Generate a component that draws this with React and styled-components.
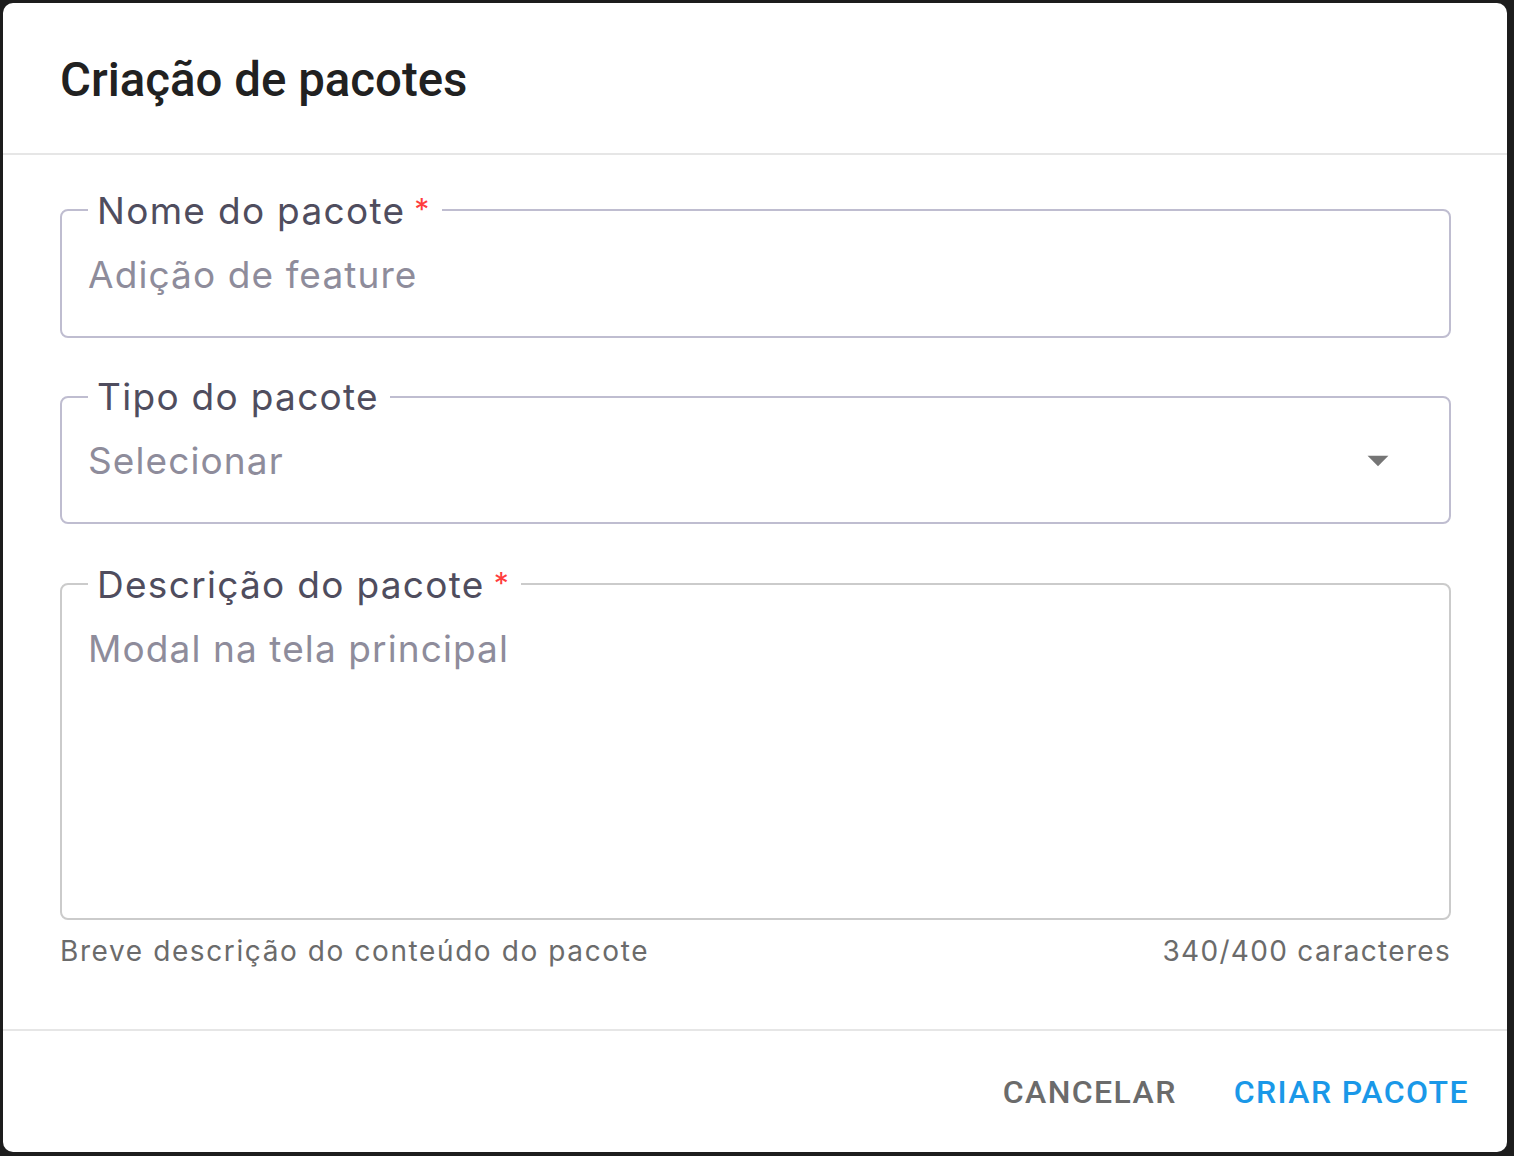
import React from "react";
import styled, { createGlobalStyle } from "styled-components";

const GlobalStyle = createGlobalStyle`
  html, body { margin: 0; padding: 0; }
  body { background: #1d1d1d; }
  * { box-sizing: border-box; }
`;

const Page = styled.div`
  padding: 3px 7px 4px 3px;
  height: 1156px;
`;

const Dialog = styled.div`
  background: #ffffff;
  border-radius: 10px;
  height: 1149px;
  display: flex;
  flex-direction: column;
  overflow: hidden;
`;

const Header = styled.header`
  height: 152px;
  display: flex;
  align-items: center;
  padding: 3px 57px 0;
  border-bottom: 2px solid #e6e6e6;
`;

const Title = styled.h1`
  margin: 0;
  font-family: Roboto, "Liberation Sans", sans-serif;
  font-weight: 500;
  font-size: 47.4px;
  color: #212121;
  letter-spacing: 0;
`;

const Content = styled.div`
  padding: 32px 56px 60px 57px;
  display: flex;
  flex-direction: column;
  gap: 37px;
`;

const Field = styled.fieldset`
  margin: 0;
  padding: 0 26px;
  border: 2px solid ${(p) => p.$border};
  border-radius: 8px;
  min-width: 0;
`;

const Legend = styled.legend`
  padding: 0 11px 0 9px;
  font-family: Inter, "Noto Sans", sans-serif;
  font-size: 37px;
  line-height: 44px;
  letter-spacing: 1.3px;
  color: #4f4d5e;
`;

const Required = styled.span`
  color: #ff3d3d;
  margin-left: 9px;
  font-size: 30px;
  vertical-align: 4px;
`;

const TextInput = styled.input`
  display: block;
  width: 100%;
  height: 44px;
  margin: 19px 0 40px;
  padding: 0;
  border: none;
  outline: none;
  background: transparent;
  font-family: Inter, "Noto Sans", sans-serif;
  font-size: 37px;
  letter-spacing: 1.1px;
  color: #4f4d5e;
  &::placeholder { color: #8e8c9b; }
`;

const TextArea = styled.textarea`
  display: block;
  width: 100%;
  height: 291px;
  margin: 20px 0 0;
  padding: 0;
  border: none;
  outline: none;
  resize: none;
  background: transparent;
  font-family: Inter, "Noto Sans", sans-serif;
  font-size: 37px;
  line-height: 44px;
  letter-spacing: 1.1px;
  color: #4f4d5e;
  &::placeholder { color: #8e8c9b; }
`;

const SelectRow = styled.div`
  display: flex;
  align-items: center;
  justify-content: space-between;
  height: 44px;
  margin: 19px 0 40px;
  padding-right: 20px;
  cursor: pointer;
`;

const SelectValue = styled.span`
  font-family: Inter, "Noto Sans", sans-serif;
  font-size: 37px;
  letter-spacing: 1.1px;
  color: #8e8c9b;
`;

const Arrow = styled.svg`
  width: 50px;
  height: 50px;
  fill: #757575;
`;

const DescriptionBlock = styled.div`
  display: flex;
  flex-direction: column;
  gap: 13px;
`;

const HelperRow = styled.div`
  display: flex;
  justify-content: space-between;
  font-family: Inter, "Noto Sans", sans-serif;
  font-size: 28px;
  line-height: 36px;
  letter-spacing: 1.3px;
  color: #6b6b6b;
`;

const HelperLeft = styled.span`
  letter-spacing: 1.6px;
`;

const Footer = styled.footer`
  flex: 1;
  border-top: 2px solid #e6e6e6;
  display: flex;
  align-items: center;
  justify-content: flex-end;
  gap: 57px;
  padding: 0 38px 0 0;
`;

const Button = styled.button`
  border: none;
  background: transparent;
  padding: 0;
  font-family: Roboto, "Liberation Sans", sans-serif;
  font-weight: 500;
  font-size: 32px;
  letter-spacing: 1.4px;
  text-transform: uppercase;
  color: ${(p) => (p.$primary ? "#1a98e8" : "#6b6b6b")};
  cursor: pointer;
`;

export default function App() {
  return (
    <>
      <GlobalStyle />
      <Page>
        <Dialog>
          <Header>
            <Title>Criação de pacotes</Title>
          </Header>
          <Content>
            <Field $border="#bfbdd0">
              <Legend>
                Nome do pacote<Required>*</Required>
              </Legend>
              <TextInput placeholder="Adição de feature" />
            </Field>
            <Field $border="#bfbdd0">
              <Legend>Tipo do pacote</Legend>
              <SelectRow>
                <SelectValue>Selecionar</SelectValue>
                <Arrow viewBox="0 0 24 24">
                  <path d="M7 10l5 5 5-5z" />
                </Arrow>
              </SelectRow>
            </Field>
            <DescriptionBlock>
              <Field $border="#cbcbcb">
                <Legend>
                  Descrição do pacote<Required>*</Required>
                </Legend>
                <TextArea placeholder="Modal na tela principal" />
              </Field>
              <HelperRow>
                <HelperLeft>Breve descrição do conteúdo do pacote</HelperLeft>
                <span>340/400 caracteres</span>
              </HelperRow>
            </DescriptionBlock>
          </Content>
          <Footer>
            <Button>Cancelar</Button>
            <Button $primary>Criar pacote</Button>
          </Footer>
        </Dialog>
      </Page>
    </>
  );
}
